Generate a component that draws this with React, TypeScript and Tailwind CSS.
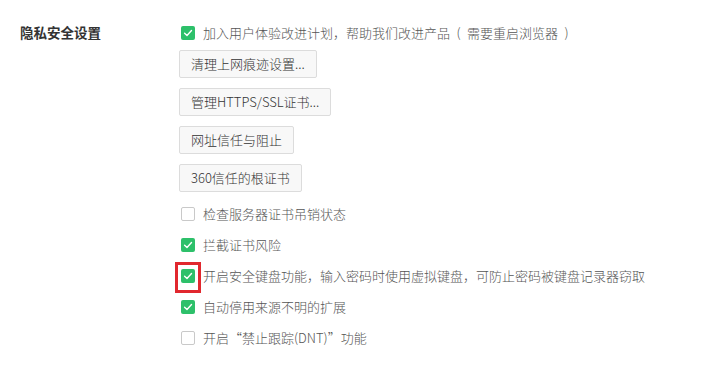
import React from "react";

const font = { fontFamily: '"Microsoft YaHei", "Noto Sans CJK SC", "Noto Sans", sans-serif' };

function Check({ checked }: { checked: boolean }) {
  if (checked) {
    return (
      <span className="flex h-[14px] w-[14px] shrink-0 items-center justify-center rounded-[2px] bg-[#2dc06a]">
        <svg width="10" height="10" viewBox="0 0 10 10" fill="none">
          <path d="M1.6 5.2 L4 7.4 L8.5 2.6" stroke="#ffffff" strokeWidth="1.4" strokeLinecap="round" strokeLinejoin="round" />
        </svg>
      </span>
    );
  }
  return <span className="block h-[14px] w-[14px] shrink-0 rounded-[2px] border border-[#c9c9c9] bg-white" />;
}

function Row({ checked, label, highlight }: { checked: boolean; label: string; highlight?: boolean }) {
  return (
    <div className="flex h-[31px] items-center">
      <div className="relative ml-[1px]">
        <Check checked={checked} />
        {highlight && (
          <div className="absolute left-[-6px] top-[-7px] h-[31px] w-[26px] border-[3px] border-[#e1282e]" />
        )}
      </div>
      <span className="ml-[8px] whitespace-nowrap text-[13px] font-light text-[#555555]">{label}</span>
    </div>
  );
}

function Btn({ label }: { label: string }) {
  return (
    <div className="flex">
      <div className="flex h-[28px] items-center whitespace-nowrap rounded-[2px] border border-[#dcdcdc] bg-[#f8f8f8] px-[11px] text-[13px] font-light text-[#333333]">
        {label}
      </div>
    </div>
  );
}

export default function App() {
  return (
    <div className="h-[374px] w-[710px] bg-white" style={font}>
      <div className="flex pt-[17px]">
        <div className="w-[160px] pl-[20px]">
          <div className="flex h-[31px] items-center text-[13.5px] font-bold text-[#333333]">隐私安全设置</div>
        </div>
        <div className="flex flex-col pl-[20px]">
          <Row checked label={"加入用户体验改进计划，帮助我们改进产品\u2002(\u2002需要重启浏览器\u2002)"} />
          <div className="-ml-[1px] mt-[2px] flex flex-col gap-[10px]">
            <Btn label="清理上网痕迹设置..." />
            <Btn label="管理HTTPS/SSL证书..." />
            <Btn label="网址信任与阻止" />
            <Btn label="360信任的根证书" />
          </div>
          <div className="mt-[6px] flex flex-col">
            <Row checked={false} label="检查服务器证书吊销状态" />
            <Row checked label="拦截证书风险" />
            <Row checked highlight label="开启安全键盘功能，输入密码时使用虚拟键盘，可防止密码被键盘记录器窃取" />
            <Row checked label="自动停用来源不明的扩展" />
            <Row checked={false} label="开启“禁止跟踪(DNT)”功能" />
          </div>
        </div>
      </div>
    </div>
  );
}
